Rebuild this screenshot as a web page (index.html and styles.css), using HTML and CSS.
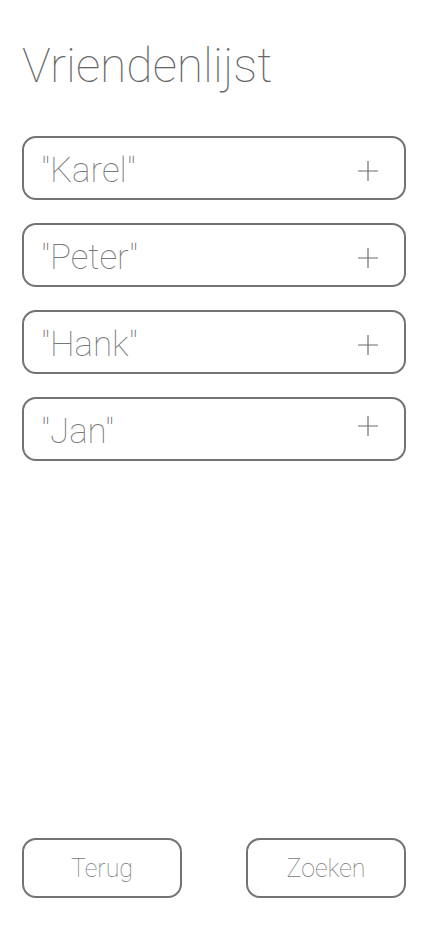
FILE: index.html
```html
<!DOCTYPE html>
<html lang="nl">
<head>
<meta charset="utf-8">
<title>Vriendenlijst</title>
<link rel="stylesheet" href="styles.css">
</head>
<body>
<main class="page">
  <h1 class="title">Vriendenlijst</h1>
  <ul class="friends">
    <li class="friend"><span class="name">"Karel"</span><svg class="plus" viewBox="0 0 20 20" width="20" height="20"><path d="M10 0V20M0 10H20"/></svg></li>
    <li class="friend"><span class="name">"Peter"</span><svg class="plus" viewBox="0 0 20 20" width="20" height="20"><path d="M10 0V20M0 10H20"/></svg></li>
    <li class="friend"><span class="name">"Hank"</span><svg class="plus" viewBox="0 0 20 20" width="20" height="20"><path d="M10 0V20M0 10H20"/></svg></li>
    <li class="friend"><span class="name">"Jan"</span><svg class="plus plus-up" viewBox="0 0 20 20" width="20" height="20"><path d="M10 0V20M0 10H20"/></svg></li>
  </ul>
  <div class="actions">
    <button class="btn">Terug</button>
    <button class="btn">Zoeken</button>
  </div>
</main>
</body>
</html>
```
FILE: styles.css
```css
* { box-sizing: border-box; }
html, body { margin: 0; padding: 0; background: #fff; }
body { font-family: Roboto, "Noto Sans", sans-serif; }
.page {
  min-height: 926px;
  padding: 38px 22px 28px 22px;
  display: flex;
  flex-direction: column;
}
.title {
  margin: 0;
  font-size: 48px;
  line-height: 56px;
  font-weight: 100;
  color: #666;
}
.friends {
  list-style: none;
  margin: 42px 0 0;
  padding: 0;
  display: flex;
  flex-direction: column;
  gap: 23px;
}
.friend {
  height: 64px;
  border: 2px solid #737373;
  border-radius: 14px;
  display: flex;
  align-items: center;
  justify-content: space-between;
  padding: 0 26px 0 17px;
}
.name {
  font-size: 35px;
  line-height: 35px;
  font-weight: 100;
  color: #777;
  padding-top: 4px;
}
.plus {
  stroke: #6f6f6f;
  stroke-width: 1.2;
  fill: none;
  margin-top: 6px;
}
.plus.plus-up { margin-top: -6px; }
.actions {
  margin-top: auto;
  display: flex;
  justify-content: space-between;
}
.btn {
  width: 160px;
  height: 60px;
  border: 2px solid #737373;
  border-radius: 14px;
  background: #fff;
  font-family: Roboto, "Noto Sans", sans-serif;
  font-size: 25px;
  font-weight: 100;
  color: #777;
  padding: 0;
}
```
